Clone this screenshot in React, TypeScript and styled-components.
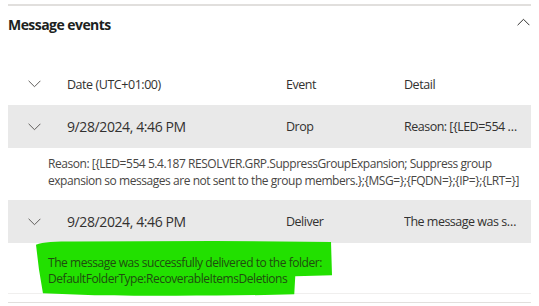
import React from 'react';
import styled, { createGlobalStyle } from 'styled-components';

const GlobalStyle = createGlobalStyle`
  body {
    margin: 0;
    background: #ffffff;
    font-family: "Open Sans", "Noto Sans", sans-serif;
    color: #323130;
  }
`;

type EventRow = {
    date: string;
    event: string;
    detail: string;
    lines: string[];
    highlight?: boolean;
};

const rows: EventRow[] = [
    {
        date: '9/28/2024, 4:46 PM',
        event: 'Drop',
        detail: 'Reason: [{LED=554 5.4.187 RESOLVER.GRP.SuppressGroupExpansion; Suppress group expansion so messages are not sent to the group members.};{MSG=};{FQDN=};{IP=};{LRT=}]',
        lines: [
            'Reason: [{LED=554 5.4.187 RESOLVER.GRP.SuppressGroupExpansion; Suppress group',
            'expansion so messages are not sent to the group members.};{MSG=};{FQDN=};{IP=};{LRT=}]',
        ],
    },
    {
        date: '9/28/2024, 4:46 PM',
        event: 'Deliver',
        detail: 'The message was successfully delivered to the folder: DefaultFolderType:RecoverableItemsDeletions',
        lines: [
            'The message was successfully delivered to the folder:',
            'DefaultFolderType:RecoverableItemsDeletions',
        ],
        highlight: true,
    },
];

const Chevron = ({ up }: { up?: boolean }) => (
    <svg width="13" height="8" viewBox="0 0 13 8" fill="none">
        <path
            d={up ? 'M0.6 7.2 L6.5 1.3 L12.4 7.2' : 'M0.6 0.8 L6.5 6.7 L12.4 0.8'}
            stroke={up ? '#323130' : '#605e5c'}
            strokeWidth="1"
        />
    </svg>
);

const App = () => {
    return (
        <Page>
            <GlobalStyle />
            <Section>
                <TitleBar>
                    <Title>Message events</Title>
                    <Chevron up />
                </TitleBar>
                <Table>
                    <Row>
                        <ToggleCell><Chevron /></ToggleCell>
                        <HeadCell>Date (UTC+01:00)</HeadCell>
                        <HeadCell>Event</HeadCell>
                        <HeadCell>Detail</HeadCell>
                    </Row>
                    {rows.map((r, i) => (
                        <Group key={i} last={i === rows.length - 1}>
                            <Row shaded>
                                <ToggleCell><Chevron /></ToggleCell>
                                <Cell big>{r.date}</Cell>
                                <Cell>{r.event}</Cell>
                                <Cell title={r.detail}>{r.detail}</Cell>
                            </Row>
                            <Details highlight={r.highlight}>
                                {r.highlight && (
                                    <Marker viewBox="0 0 300 60" preserveAspectRatio="none">
                                        <path
                                            d="M1 4 C8 1 20 0.5 40 0.5 L180 0 L298 1 L299 36 L262 37 L261 56 C200 58 120 58 60 57 L8 55 L4 30 Z"
                                            fill="#22e000"
                                        />
                                    </Marker>
                                )}
                                <DetailText highlight={r.highlight}>
                                    {r.lines.map((l, j) => (
                                        <Line key={j}>{l}</Line>
                                    ))}
                                </DetailText>
                            </Details>
                        </Group>
                    ))}
                </Table>
            </Section>
        </Page>
    );
};

export default App;

const Page = styled.div`
    width: 539px;
    height: 306px;
    overflow: hidden;
    padding: 0 8px;
    box-sizing: border-box;
`;

const Section = styled.div`
    width: 523px;
    border-top: 2px solid #e1dfdd;
    margin-top: 4px;
`;

const TitleBar = styled.div`
    display: flex;
    align-items: center;
    justify-content: space-between;
    height: 36px;
    padding-right: 1px;
    svg {
        margin-top: -5px;
    }
`;

const Title = styled.h2`
    margin: 0;
    font-size: 14px;
    letter-spacing: -0.55px;
    font-weight: 700;
    color: #201f1e;
`;

const Table = styled.div`
    margin-top: 21px;
    display: flex;
    flex-direction: column;
    border-bottom: 1px solid #e1dfdd;
    padding-bottom: 8px;
`;

const Row = styled.div<{ shaded?: boolean }>`
    display: grid;
    grid-template-columns: 59px 219px 118px minmax(0, 1fr);
    align-items: center;
    height: ${p => (p.shaded ? '43px' : '42px')};
    background: ${p => (p.shaded ? '#e9e9e9' : 'transparent')};
`;

const ToggleCell = styled.div`
    display: flex;
    align-items: center;
    padding-left: 20px;
`;

const HeadCell = styled.div`
    font-size: 12.5px;
    letter-spacing: -0.45px;
    color: #323130;
    white-space: nowrap;
`;

const Cell = styled.div<{ big?: boolean }>`
    min-width: 0;
    font-size: ${p => (p.big ? '14px' : '12.5px')};
    letter-spacing: ${p => (p.big ? '-0.4px' : '-0.5px')};
    color: #323130;
    white-space: nowrap;
    overflow: hidden;
    text-overflow: ellipsis;
    padding-right: 9px;
`;

const Group = styled.div<{ last?: boolean }>`
    display: flex;
    flex-direction: column;
    border-bottom: ${p => (p.last ? '1px solid #f0efee' : 'none')};
`;

const Details = styled.div<{ highlight?: boolean }>`
    position: relative;
    padding: ${p => (p.highlight ? '12px 10px 6px 40px' : '7px 10px 11px 40px')};
`;

const Marker = styled.svg`
    position: absolute;
    left: 27px;
    top: -2px;
    width: 298px;
    height: 57px;
    z-index: 0;
`;

const DetailText = styled.div<{ highlight?: boolean }>`
    position: relative;
    z-index: 1;
    font-size: 12px;
    letter-spacing: -0.45px;
    line-height: ${p => (p.highlight ? '16px' : '17px')};
    color: ${p => (p.highlight ? '#1f4d0f' : '#484644')};
`;

const Line = styled.div`
    white-space: nowrap;
`;
